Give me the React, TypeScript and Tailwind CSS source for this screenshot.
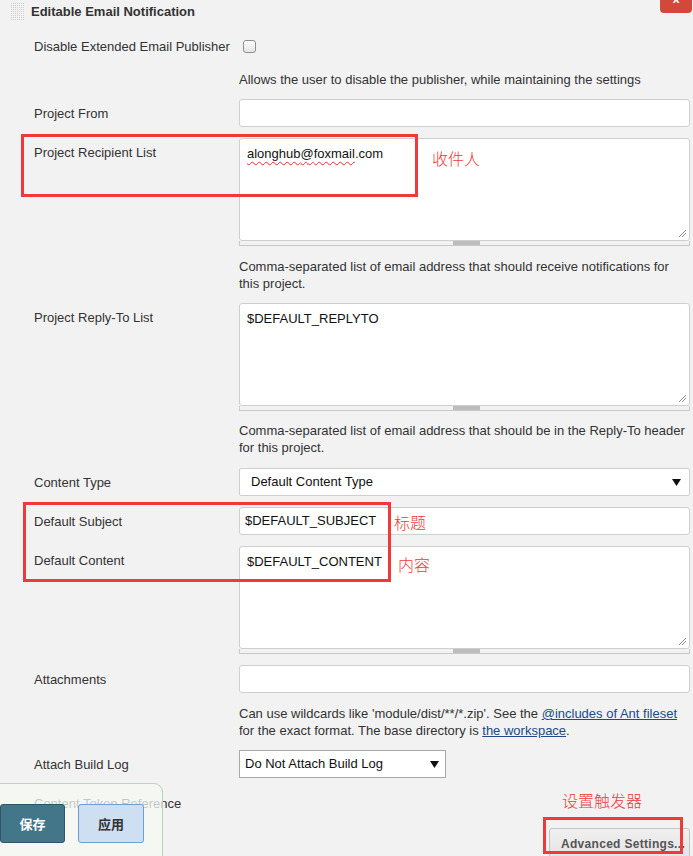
import React from "react";

const Grip = () => (
  <svg width="13" height="18" viewBox="0 0 13 18" className="block">
    <defs>
      <pattern id="dots" width="2" height="2" patternUnits="userSpaceOnUse">
        <rect x="0" y="0" width="1" height="1" fill="#cfcfcf" />
      </pattern>
    </defs>
    <rect x="0" y="0" width="13" height="18" fill="url(#dots)" />
  </svg>
);

const ResizeGrip = () => (
  <svg width="9" height="9" viewBox="0 0 9 9" className="absolute right-[2px] bottom-[2px]">
    <line x1="1" y1="8" x2="8" y2="1" stroke="#8a8a8a" strokeWidth="1" />
    <line x1="4" y1="8" x2="8" y2="4" stroke="#8a8a8a" strokeWidth="1" />
  </svg>
);

const Arrow = () => (
  <svg width="9" height="7" viewBox="0 0 9 7" className="block">
    <path d="M0 0 L9 0 L4.5 7 Z" fill="#111" />
  </svg>
);

const Label = ({ children }: { children: React.ReactNode }) => (
  <div className="w-[239px] shrink-0 pl-[34px] pt-[6px] leading-[18px]">{children}</div>
);

const TextArea = ({ children }: { children?: React.ReactNode }) => (
  <div className="w-[451px]">
    <div className="relative h-[103px] bg-white border border-[#cfcfcf] rounded-[3px] pl-[7px] pt-[6px] leading-[18px] text-[#111]">
      {children}
      <ResizeGrip />
    </div>
    <div className="relative h-[5px] border-x border-b border-[#c8c8c8]">
      <div className="absolute left-[213px] top-0 w-[27px] h-[4px] bg-[#bdbdbd]" />
    </div>
  </div>
);

const Input = ({ children }: { children?: React.ReactNode }) => (
  <div className="w-[451px] h-[28px] bg-white border border-[#cfcfcf] rounded-[3px] pl-[5px] flex items-center text-[#111]">
    {children}
  </div>
);

const Help = ({ children }: { children: React.ReactNode }) => (
  <div className="pl-[239px] leading-[17px] whitespace-nowrap">{children}</div>
);

const wavy = "underline decoration-wavy decoration-[#e03030] decoration-1 underline-offset-[3px]";

export default function App() {
  return (
    <div className="relative w-[693px] h-[856px] overflow-hidden bg-[#f2f2f2] text-[13px] text-[#333] font-['Liberation_Sans',Arial,sans-serif]">
      {/* header */}
      <div className="h-[24px] flex items-center pl-[11px]">
        <Grip />
        <span className="ml-[7px] font-bold">Editable Email Notification</span>
      </div>
      <div className="absolute right-[1px] top-[-8px] w-[32px] h-[21px] rounded-[4px] bg-[#d24939] text-white text-[12px] font-bold flex justify-center leading-[14px]">
        x
      </div>

      {/* Disable row */}
      <div className="mt-[11px] h-[22px] flex items-center">
        <div className="w-[239px] shrink-0 pl-[34px] pt-[1px]">Disable Extended Email Publisher</div>
        <div className="ml-[4px] w-[13px] h-[13px] rounded-[3px] border border-[#8f8f8f] bg-gradient-to-b from-white to-[#e4e4e4]" />
      </div>
      <div className="mt-[14px]">
        <Help>Allows the user to disable the publisher, while maintaining the settings</Help>
      </div>

      <div className="mt-[11px] flex items-start">
        <Label>Project From</Label>
        <Input />
      </div>

      <div className="mt-[11px] flex items-start">
        <Label>Project Recipient List</Label>
        <TextArea>
          <span className={wavy}>alonghub</span>
          <span className={wavy}>@</span>
          <span className={wavy}>foxmail</span>
          .com
        </TextArea>
      </div>
      <div className="mt-[12px]">
        <Help>
          Comma-separated list of email address that should receive notifications for
          <br />
          this project.
        </Help>
      </div>

      <div className="mt-[11px] flex items-start">
        <Label>Project Reply-To List</Label>
        <TextArea>$DEFAULT_REPLYTO</TextArea>
      </div>
      <div className="mt-[11px]">
        <Help>
          Comma-separated list of email address that should be in the Reply-To header
          <br />
          for this project.
        </Help>
      </div>

      <div className="mt-[12px] flex items-start">
        <Label>Content Type</Label>
        <div className="w-[451px] h-[28px] bg-white border border-[#cfcfcf] rounded-[2px] pl-[11px] pr-[8px] flex items-center justify-between text-[#111]">
          <span>Default Content Type</span>
          <Arrow />
        </div>
      </div>

      <div className="mt-[11px] flex items-start">
        <Label>Default Subject</Label>
        <Input>$DEFAULT_SUBJECT</Input>
      </div>

      <div className="mt-[11px] flex items-start">
        <Label>Default Content</Label>
        <TextArea>$DEFAULT_CONTENT</TextArea>
      </div>

      <div className="mt-[11px] flex items-start">
        <Label>Attachments</Label>
        <Input />
      </div>
      <div className="mt-[12px]">
        <Help>
          Can use wildcards like 'module/dist/**/*.zip'. See the{" "}
          <span className="underline text-[#204a87]">@includes of Ant fileset</span>
          <br />
          for the exact format. The base directory is{" "}
          <span className="underline text-[#204a87]">the workspace</span>.
        </Help>
      </div>

      <div className="mt-[11px] flex items-start">
        <Label>Attach Build Log</Label>
        <div className="w-[207px] h-[28px] bg-white border border-[#a9a9a9] pl-[5px] pr-[6px] flex items-center justify-between text-[#111]">
          <span>Do Not Attach Build Log</span>
          <Arrow />
        </div>
      </div>

      <div className="mt-[17px] pl-[34px] leading-[17px]">Content Token Reference</div>

      <div className="mt-[16px] flex justify-end pr-[3px]">
        <div className="w-[141px] h-[40px] border border-[#c4c4c4] rounded-[3px] bg-gradient-to-b from-[#f0f0f0] to-[#e0e0e0] pt-[6px] pl-[11px] font-bold text-[12px] text-[#555] whitespace-nowrap tracking-[0.3px]">
          Advanced Settings...
        </div>
      </div>

      {/* bottom-left floating save bar */}
      <div className="absolute left-[-1px] top-[783px] w-[164px] h-[90px] rounded-tr-[9px] border border-[#b9d5c2] bg-[#f5f8f3]/75">
        <div className="absolute left-0 top-[20px] w-[65px] h-[39px] rounded-[3px] border border-[#2e5666] bg-[#44768a] text-white font-bold text-[13px] flex items-center justify-center font-['Noto_Sans_CJK_SC',sans-serif]">
          保存
        </div>
        <div className="absolute left-[78px] top-[20px] w-[66px] h-[39px] rounded-[3px] border border-[#6c9fd6] bg-[#cddff0] text-[#333] font-bold text-[13px] flex items-center justify-center font-['Noto_Sans_CJK_SC',sans-serif]">
          应用
        </div>
      </div>

      {/* red annotations */}
      <div className="absolute left-[21px] top-[134px] w-[397px] h-[63px] border-[3px] border-[#f03a3a]" />
      <div className="absolute left-[432px] top-[147px] text-[16px] leading-[22px] text-[#f03a3a] font-['Noto_Sans_CJK_SC',sans-serif] font-light">
        收件人
      </div>
      <div className="absolute left-[23px] top-[502px] w-[368px] h-[80px] border-[3px] border-[#f03a3a]" />
      <div className="absolute left-[394px] top-[511px] text-[16px] leading-[22px] text-[#f03a3a] font-['Noto_Sans_CJK_SC',sans-serif] font-light">
        标题
      </div>
      <div className="absolute left-[398px] top-[553px] text-[16px] leading-[22px] text-[#f03a3a] font-['Noto_Sans_CJK_SC',sans-serif] font-light">
        内容
      </div>
      <div className="absolute left-[562px] top-[789px] text-[16px] leading-[22px] text-[#f03a3a] font-['Noto_Sans_CJK_SC',sans-serif] font-light">
        设置触发器
      </div>
      <div className="absolute left-[543px] top-[817px] w-[140px] h-[37px] border-[3px] border-[#f03a3a]" />
    </div>
  );
}
